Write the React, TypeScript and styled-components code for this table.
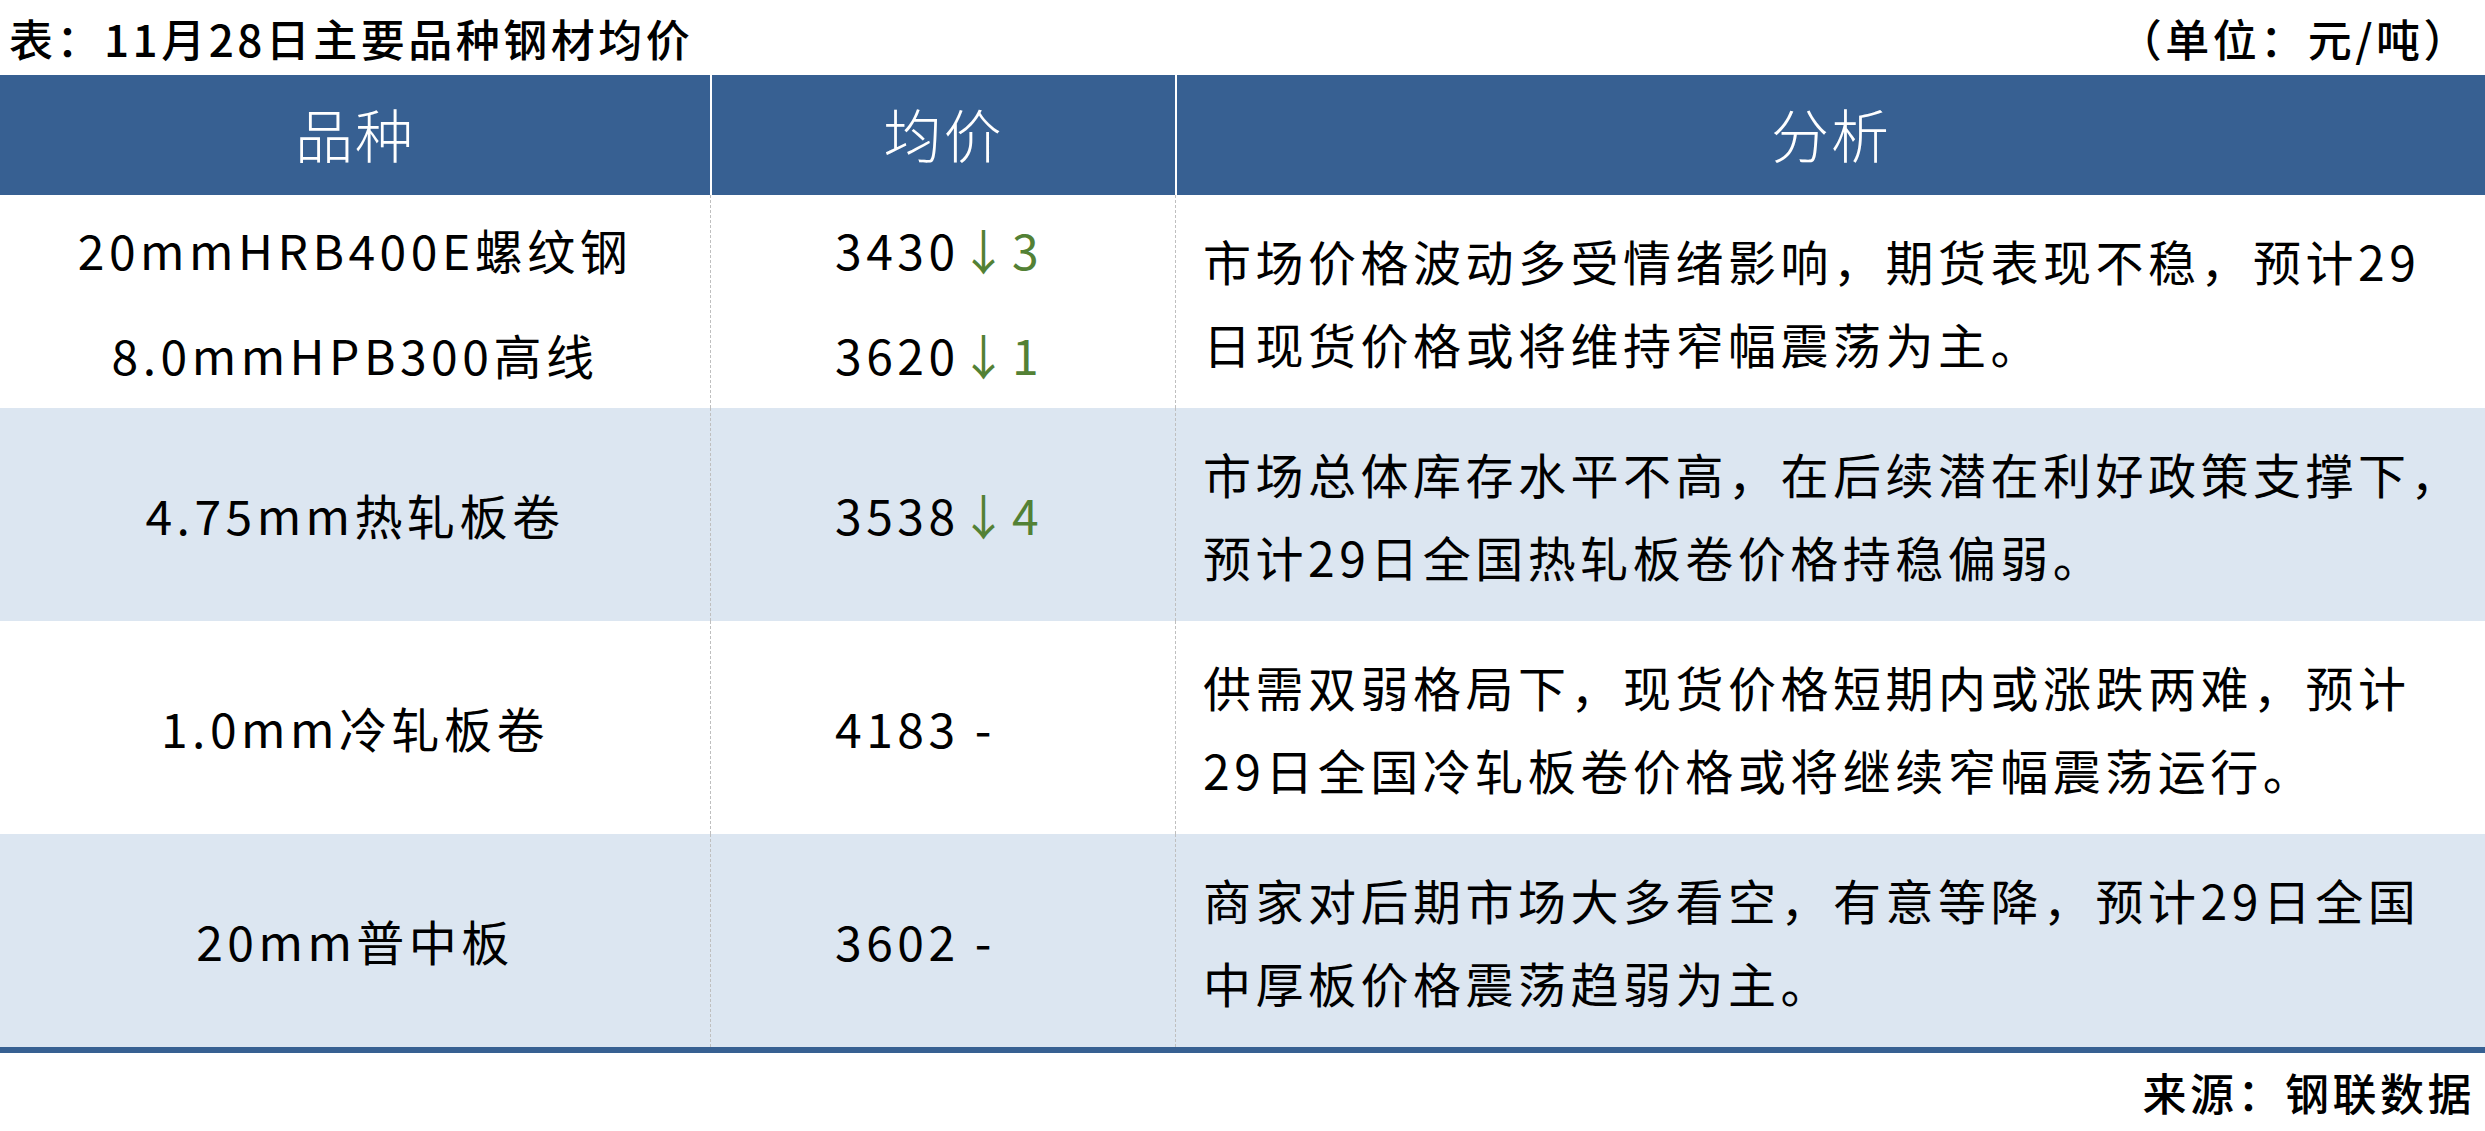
import React from "react";
import styled, { createGlobalStyle } from "styled-components";

const Global = createGlobalStyle`
  html, body { margin: 0; padding: 0; background: #ffffff; }
  body { font-family: "Noto Sans CJK SC", "Noto Sans", sans-serif; color: #000; }
`;

const Page = styled.div`
  width: 2485px;
  height: 1131px;
  display: flex;
  flex-direction: column;
  overflow: hidden;
`;

const TitleBar = styled.div`
  height: 75px;
  display: flex;
  align-items: center;
  justify-content: space-between;
  padding: 0 14px 0 9px;
  font-size: 44px;
  font-weight: 500;
  letter-spacing: 3.5px;
`;

const Table = styled.div`
  display: grid;
  grid-template-columns: 710px 465px 1fr;
  border-bottom: 6px solid #376092;
`;

const HeadCell = styled.div<{ $first?: boolean }>`
  height: 120px;
  background: #376092;
  color: #ffffff;
  display: flex;
  align-items: center;
  justify-content: center;
  font-size: 58px;
  font-weight: 300;
  letter-spacing: 2px;
  border-left: ${(p) => (p.$first ? "none" : "2px solid #ffffff")};
  padding-bottom: 4px;
  box-sizing: border-box;
`;

const BodyCell = styled.div<{ $shaded?: boolean; $first?: boolean; $align: "center" | "left" }>`
  height: ${213}px;
  box-sizing: border-box;
  background: ${(p) => (p.$shaded ? "#dce6f1" : "#ffffff")};
  border-left: ${(p) => (p.$first ? "none" : "1px dashed #bfbfbf")};
  display: flex;
  flex-direction: column;
  justify-content: center;
  align-items: ${(p) => (p.$align === "center" ? "center" : "flex-start")};
  font-size: 48px;
  letter-spacing: 4.5px;
  white-space: nowrap;
`;

const PriceCellBox = styled(BodyCell)`
  padding-left: 124px;
`;

const AnalysisCellBox = styled(BodyCell)`
  padding-left: 27px;
`;

const ProductLine = styled.div`
  line-height: 105px;
`;

const AnalysisLine = styled.div`
  line-height: 83px;
`;

const Change = styled.span`
  color: #538135;
`;

const Source = styled.div`
  flex: 1;
  display: flex;
  align-items: center;
  justify-content: flex-end;
  padding-right: 10px;
  font-size: 44px;
  font-weight: 500;
  letter-spacing: 3.5px;
`;

type Price = { v: string; d?: string };
type Row = { products: string[]; prices: Price[]; analysis: string[]; shaded: boolean };

const rows: Row[] = [
  {
    products: ["20mmHRB400E螺纹钢", "8.0mmHPB300高线"],
    prices: [
      { v: "3430", d: "3" },
      { v: "3620", d: "1" },
    ],
    analysis: ["市场价格波动多受情绪影响，期货表现不稳，预计29", "日现货价格或将维持窄幅震荡为主。"],
    shaded: false,
  },
  {
    products: ["4.75mm热轧板卷"],
    prices: [{ v: "3538", d: "4" }],
    analysis: ["市场总体库存水平不高，在后续潜在利好政策支撑下，", "预计29日全国热轧板卷价格持稳偏弱。"],
    shaded: true,
  },
  {
    products: ["1.0mm冷轧板卷"],
    prices: [{ v: "4183" }],
    analysis: ["供需双弱格局下，现货价格短期内或涨跌两难，预计", "29日全国冷轧板卷价格或将继续窄幅震荡运行。"],
    shaded: false,
  },
  {
    products: ["20mm普中板"],
    prices: [{ v: "3602" }],
    analysis: ["商家对后期市场大多看空，有意等降，预计29日全国", "中厚板价格震荡趋弱为主。"],
    shaded: true,
  },
];

export default function App() {
  return (
    <Page>
      <Global />
      <TitleBar>
        <span>表：11月28日主要品种钢材均价</span>
        <span>（单位：元/吨）</span>
      </TitleBar>
      <Table>
        <HeadCell $first>品种</HeadCell>
        <HeadCell>均价</HeadCell>
        <HeadCell>分析</HeadCell>
        {rows.map((r, i) => (
          <React.Fragment key={i}>
            <BodyCell $first $shaded={r.shaded} $align="center">
              {r.products.map((p) => (
                <ProductLine key={p}>{p}</ProductLine>
              ))}
            </BodyCell>
            <PriceCellBox $shaded={r.shaded} $align="left">
              {r.prices.map((p) => (
                <ProductLine key={p.v}>
                  {p.d ? (
                    <>
                      {p.v}
                      <Change>↓{p.d}</Change>
                    </>
                  ) : (
                    <>{p.v} -</>
                  )}
                </ProductLine>
              ))}
            </PriceCellBox>
            <AnalysisCellBox $shaded={r.shaded} $align="left">
              {r.analysis.map((a) => (
                <AnalysisLine key={a}>{a}</AnalysisLine>
              ))}
            </AnalysisCellBox>
          </React.Fragment>
        ))}
      </Table>
      <Source>来源：钢联数据</Source>
    </Page>
  );
}
